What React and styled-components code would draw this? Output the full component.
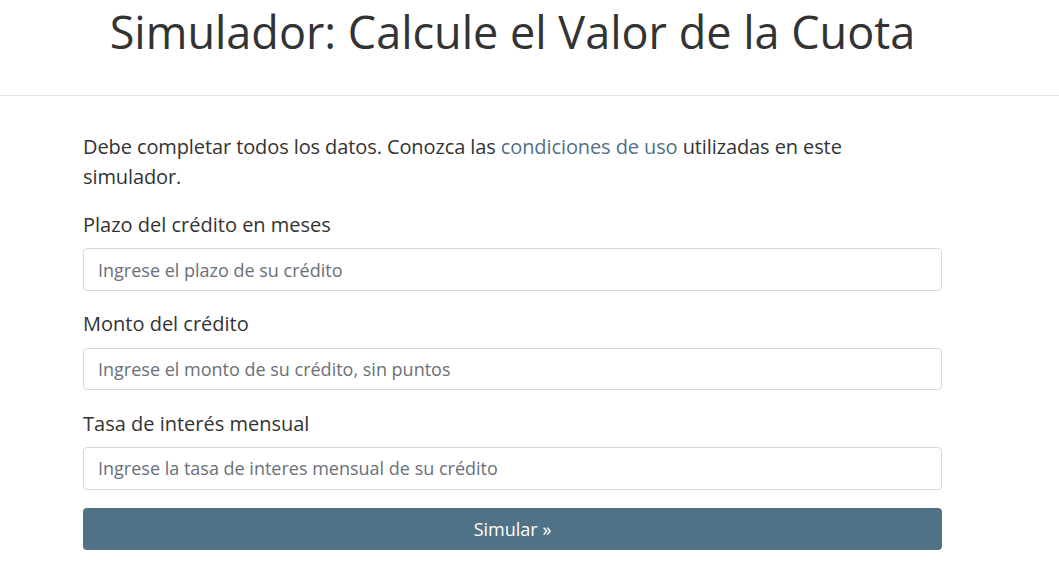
import React from "react";
import styled, { createGlobalStyle } from "styled-components";

const Global = createGlobalStyle`
  html, body { margin: 0; padding: 0; background: #fff; }
  body { font-family: "Open Sans", "Noto Sans", sans-serif; color: #333; }
  * { box-sizing: border-box; }
`;

const Header = styled.header`
  border-bottom: 1px solid #e3e3e3;
  height: 96px;
`;

const Inner = styled.div`
  width: 859px;
  margin-left: 83px;
`;

const Title = styled.h1`
  margin: 0;
  padding-top: 3px;
  text-align: center;
  font-size: 45px;
  font-weight: 400;
  line-height: 58px;
  white-space: nowrap;
  color: #333;
`;

const Main = styled.main`
  padding-top: 36px;
`;

const Intro = styled.p`
  margin: 0 0 18px;
  font-size: 20px;
  line-height: 30px;
  letter-spacing: -0.1px;
`;

const Link = styled.a`
  color: #4f7085;
  text-decoration: none;
`;

const Field = styled.div`
  margin-bottom: ${(p) => (p.$last ? 0 : 18.5)}px;
`;

const Label = styled.label`
  display: block;
  font-size: 20px;
  line-height: 30px;
  margin-bottom: 8.4px;
`;

const Input = styled.input`
  display: block;
  width: 100%;
  height: 42.5px;
  padding: 0 14px;
  border: 1px solid #d3d9e2;
  border-radius: 4px;
  font-family: inherit;
  font-size: 18px;
  color: #333;
  &::placeholder { color: #6b7079; }
`;

const Button = styled.button`
  display: block;
  width: 100%;
  height: 42px;
  margin-top: 18px;
  border: none;
  border-radius: 4px;
  background: #4f7287;
  color: #fff;
  font-family: inherit;
  font-size: 18px;
`;

const fields = [
  ["Plazo del crédito en meses", "Ingrese el plazo de su crédito"],
  ["Monto del crédito", "Ingrese el monto de su crédito, sin puntos"],
  ["Tasa de interés mensual", "Ingrese la tasa de interes mensual de su crédito"],
];

export default function App() {
  return (
    <>
      <Global />
      <Header>
        <Inner>
          <Title>Simulador: Calcule el Valor de la Cuota</Title>
        </Inner>
      </Header>
      <Main>
        <Inner>
          <Intro>
            Debe completar todos los datos. Conozca las <Link href="#">condiciones de uso</Link> utilizadas en este simulador.
          </Intro>
          {fields.map(([l, p], i) => (
            <Field key={i} $last={i === fields.length - 1}>
              <Label>{l}</Label>
              <Input placeholder={p} />
            </Field>
          ))}
          <Button>Simular »</Button>
        </Inner>
      </Main>
    </>
  );
}
